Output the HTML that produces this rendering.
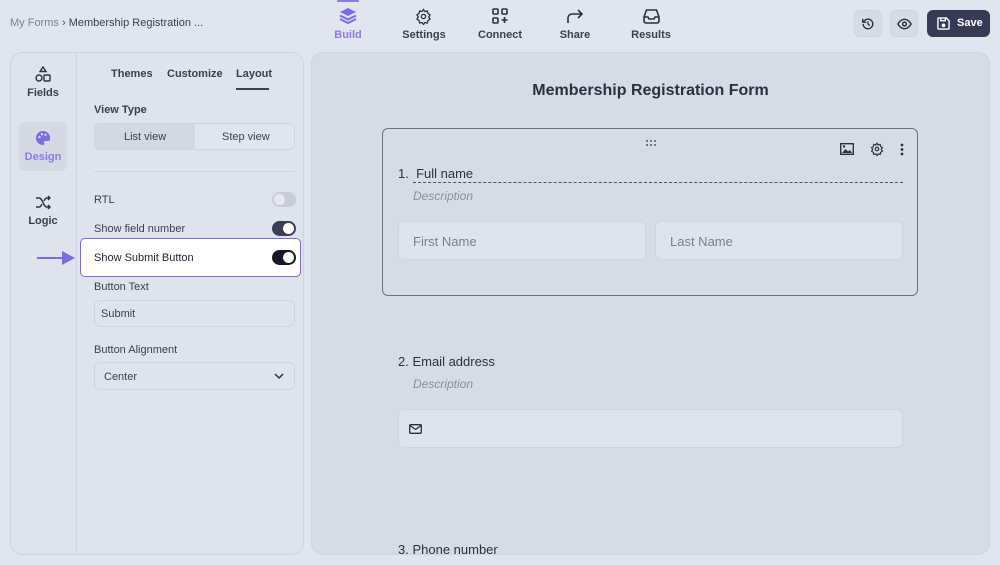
<!DOCTYPE html>
<html><head><meta charset="utf-8"><style>
*{box-sizing:border-box;margin:0;padding:0}
body{width:1000px;height:565px;overflow:hidden;background:#e1e5ed;font-family:"Liberation Sans",sans-serif;color:#2b3040;position:relative}
.a{position:absolute}
.t{font-size:11px;color:#3a3f4e}
svg{display:block}
.nav{text-align:center;font-size:11px;font-weight:bold;color:#3a3f4e}
.field{background:#dfe3eb;border:1px solid #cfd5df;border-radius:6px}
.tog{width:24px;height:15px;border-radius:8px;background:#3a3f52}
.tog::after{content:"";position:absolute;right:2px;top:2px;width:11px;height:11px;border-radius:50%;background:#fff}
.tog{position:absolute}
</style></head><body>
<div class="a" style="left:10px;top:17px;font-size:11px;color:#7c8190">My Forms <span style="color:#555">›</span> <span style="color:#3a3f4e">Membership Registration ...</span></div>

<div class="a" style="left:337px;top:0;width:22px;height:2px;background:#8b7be8;border-radius:1px"></div>
<div class="a" style="left:337px;top:7px;width:22px"><svg width="22" height="18" viewBox="0 0 22 18"><path d="M11 1L19 5L11 9L3 5Z" fill="#7c6ce0"/><path d="M3 8.5L11 12.5L19 8.5M3 12L11 16L19 12" stroke="#7c6ce0" stroke-width="2" fill="none"/></svg></div>
<div class="a nav" style="left:328px;top:29px;width:40px;color:#8b7be8">Build</div>
<div class="a" style="left:415px;top:8px"><svg width="17" height="17" viewBox="0 0 24 24" fill="none" stroke="#2b3040" stroke-width="1.8"><circle cx="12" cy="12" r="3"/><path d="M12 2l2 3 3.5-.8.8 3.5 3 2-2 3 2 3-3 2-.8 3.5-3.5-.8-2 3-2-3-3.5.8-.8-3.5-3-2 2-3-2-3 3-2 .8-3.5 3.5.8z"/></svg></div>
<div class="a nav" style="left:399px;top:29px;width:50px">Settings</div>
<div class="a" style="left:492px;top:8px"><svg width="16" height="16" viewBox="0 0 16 16" fill="none" stroke="#2b3040" stroke-width="1.6"><rect x="1" y="1" width="5" height="5" rx="1"/><rect x="10" y="1" width="5" height="5" rx="1"/><rect x="1" y="10" width="5" height="5" rx="1"/><path d="M12.5 9v6M9.5 12h6"/></svg></div>
<div class="a nav" style="left:475px;top:29px;width:50px">Connect</div>
<div class="a" style="left:566px;top:8px"><svg width="18" height="16" viewBox="0 0 18 16" fill="none" stroke="#2b3040" stroke-width="1.6"><path d="M2 15V10a4 4 0 014-4h10M12 2l4 4-4 4"/></svg></div>
<div class="a nav" style="left:555px;top:29px;width:40px">Share</div>
<div class="a" style="left:643px;top:8px"><svg width="17" height="16" viewBox="0 0 17 16" fill="none" stroke="#2b3040" stroke-width="1.6"><path d="M1 9l2.5-7h10L16 9v4a2 2 0 01-2 2H3a2 2 0 01-2-2z M1 9h4l1 2h5l1-2h4"/></svg></div>
<div class="a nav" style="left:626px;top:29px;width:50px">Results</div>

<div class="a" style="left:854px;top:10px;width:28px;height:27px;border-radius:6px;background:#d6dbe4;border:1px solid #cdd3de"><svg style="margin:6px 0 0 6px" width="14" height="14" viewBox="0 0 16 16" fill="none" stroke="#2b3040" stroke-width="1.5"><path d="M2.5 8a5.5 5.5 0 101.6-3.9L2 6M2 2v4h4M8 5v3l2 2"/></svg></div>
<div class="a" style="left:890px;top:10px;width:28px;height:27px;border-radius:6px;background:#d6dbe4;border:1px solid #cdd3de"><svg style="margin:7px 0 0 6px" width="15" height="12" viewBox="0 0 16 12" fill="none" stroke="#2b3040" stroke-width="1.5"><path d="M1 6s2.5-5 7-5 7 5 7 5-2.5 5-7 5-7-5-7-5z"/><circle cx="8" cy="6" r="2"/></svg></div>
<div class="a" style="left:927px;top:10px;width:63px;height:27px;border-radius:6px;background:#363a55;color:#fff;font-size:11px;font-weight:bold"><svg class="a" style="left:10px;top:7px" width="13" height="13" viewBox="0 0 14 14" fill="none" stroke="#fff" stroke-width="1.5"><path d="M1 2a1 1 0 011-1h8l3 3v8a1 1 0 01-1 1H2a1 1 0 01-1-1z M4 1v3h5V1"/><circle cx="7" cy="9" r="1.2" fill="#fff"/></svg><span class="a" style="left:30px;top:7px">Save</span></div>

<!-- left panel -->
<div class="a" style="left:10px;top:52px;width:294px;height:503px;border:1px solid #cfd5df;border-radius:12px;background:#dfe3eb"></div>
<div class="a" style="left:76px;top:53px;width:1px;height:501px;background:#cfd5df"></div>
<div class="a" style="left:35px;top:66px"><svg width="16" height="16" viewBox="0 0 16 16" fill="none" stroke="#2b3040" stroke-width="1.4"><path d="M8 1l3 4.5H5z"/><circle cx="4" cy="12" r="3"/><rect x="9" y="9" width="6" height="6" rx="1"/></svg></div>
<div class="a nav" style="left:23px;top:87px;width:40px">Fields</div>
<div class="a" style="left:19px;top:122px;width:48px;height:49px;border-radius:6px;background:#d4d9e3"></div>
<div class="a" style="left:35px;top:130px"><svg width="16" height="16" viewBox="0 0 16 16"><path d="M8 1a7 7 0 000 14c1.2 0 1.5-1 1-2s0-2 1.5-2H13a2 2 0 002-2A7 7 0 008 1z" fill="#7c6ce0"/><circle cx="4.5" cy="7" r="1.2" fill="#d4d9e3"/><circle cx="7" cy="4.2" r="1.2" fill="#d4d9e3"/><circle cx="10.5" cy="4.8" r="1.2" fill="#d4d9e3"/></svg></div>
<div class="a nav" style="left:23px;top:151px;width:40px;color:#8b7be8">Design</div>
<div class="a" style="left:35px;top:195px"><svg width="16" height="15" viewBox="0 0 16 15" fill="none" stroke="#2b3040" stroke-width="1.4"><path d="M1 3h3c4 0 4 9 8 9h3M1 12h3c1.5 0 2.3-1.3 3-3M9 6c.7-1.7 1.5-3 3-3h3M13 1l2 2-2 2M13 10l2 2-2 2"/></svg></div>
<div class="a nav" style="left:23px;top:215px;width:40px">Logic</div>

<div class="a nav" style="left:111px;top:68px">Themes</div>
<div class="a nav" style="left:167px;top:68px">Customize</div>
<div class="a nav" style="left:236px;top:68px">Layout</div>
<div class="a" style="left:236px;top:88px;width:33px;height:2px;background:#3a3f52"></div>
<div class="a nav" style="left:94px;top:104px">View Type</div>
<div class="a" style="left:94px;top:123px;width:201px;height:27px;border:1px solid #cfd5df;border-radius:6px;background:#e1e5ed;overflow:hidden"><div class="a" style="left:0;top:0;width:100px;height:27px;background:#d3d8e2"></div><span class="a t" style="left:29px;top:7px">List view</span><span class="a t" style="left:127px;top:7px">Step view</span></div>
<div class="a" style="left:94px;top:171px;width:201px;height:1px;background:#cfd5df"></div>
<div class="a t" style="left:94px;top:194px">RTL</div>
<div class="tog" style="left:272px;top:192px;background:#c7ccd6"></div><div class="a" style="left:274px;top:194px;width:11px;height:11px;border-radius:50%;background:#e6e9ef"></div>
<style>.tog[style*="c7ccd6"]::after{display:none}</style>
<div class="a t" style="left:94px;top:223px">Show field number</div>
<div class="tog" style="left:272px;top:221px"></div>
<div class="a" style="left:80px;top:238px;width:221px;height:39px;border:1.5px solid #7c6ce0;border-radius:5px;background:#fff"></div>
<div class="a t" style="left:94px;top:252px;color:#1f2330">Show Submit Button</div>
<div class="tog" style="left:272px;top:250px;background:#151826"></div>
<div class="a" style="left:37px;top:257px;width:28px;height:2px;background:#7c6ce0"></div>
<div class="a" style="left:62px;top:251px;width:0;height:0;border-left:13px solid #7c6ce0;border-top:7px solid transparent;border-bottom:7px solid transparent"></div>
<div class="a t" style="left:94px;top:281px">Button Text</div>
<div class="a field" style="left:94px;top:300px;width:201px;height:27px"><span class="a t" style="left:6px;top:7px">Submit</span></div>
<div class="a t" style="left:94px;top:344px">Button Alignment</div>
<div class="a field" style="left:94px;top:362px;width:201px;height:28px"><span class="a t" style="left:9px;top:8px">Center</span><svg class="a" style="left:179px;top:10px" width="10" height="7" viewBox="0 0 10 7" fill="none" stroke="#2b3040" stroke-width="1.5"><path d="M1 1l4 4 4-4"/></svg></div>

<!-- canvas -->
<div class="a" style="left:311px;top:52px;width:679px;height:503px;border:1px solid #cfd5df;border-radius:12px;background:#d6dce6;overflow:hidden">
<div class="a" style="left:0;width:677px;top:29px;text-align:center;font-size:16px;font-weight:bold;color:#2b3040">Membership Registration Form</div>
<div class="a" style="left:70px;top:75px;width:536px;height:168px;border:1.5px solid #6c7282;border-radius:6px"></div>
<svg class="a" style="left:333px;top:86px" width="12" height="8" viewBox="0 0 12 8" fill="#555"><circle cx="2" cy="2" r="1"/><circle cx="6" cy="2" r="1"/><circle cx="10" cy="2" r="1"/><circle cx="2" cy="6" r="1"/><circle cx="6" cy="6" r="1"/><circle cx="10" cy="6" r="1"/></svg>
<svg class="a" style="left:528px;top:90px" width="14" height="12" viewBox="0 0 14 12"><rect x="0.7" y="0.7" width="12.6" height="10.6" fill="none" stroke="#2b3040" stroke-width="1.4"/><path d="M2 10l3.5-4 2.5 2.5 2-1.5 2 3z" fill="#2b3040"/><circle cx="4" cy="3.5" r="1.2" fill="#2b3040"/></svg>
<svg class="a" style="left:558px;top:89px" width="14" height="14" viewBox="0 0 24 24" fill="none" stroke="#2b3040" stroke-width="2"><circle cx="12" cy="12" r="3"/><path d="M12 2l2 3 3.5-.8.8 3.5 3 2-2 3 2 3-3 2-.8 3.5-3.5-.8-2 3-2-3-3.5.8-.8-3.5-3-2 2-3-2-3 3-2 .8-3.5 3.5.8z"/></svg>
<svg class="a" style="left:588px;top:90px" width="4" height="13" viewBox="0 0 4 13" fill="#2b3040"><circle cx="2" cy="2" r="1.4"/><circle cx="2" cy="6.5" r="1.4"/><circle cx="2" cy="11" r="1.4"/></svg>
<div class="a" style="left:86px;top:113px;font-size:13px;color:#2b3040">1.&nbsp; Full name</div>
<div class="a" style="left:101px;top:129px;width:490px;border-top:1px dashed #555"></div>
<div class="a" style="left:101px;top:136px;font-size:12px;font-style:italic;color:#8a8f9c">Description</div>
<div class="a field" style="left:86px;top:168px;width:248px;height:39px"><span class="a" style="left:14px;top:12px;font-size:13px;color:#7c8190">First Name</span></div>
<div class="a field" style="left:343px;top:168px;width:248px;height:39px"><span class="a" style="left:14px;top:12px;font-size:13px;color:#7c8190">Last Name</span></div>
<div class="a" style="left:86px;top:301px;font-size:13px;color:#2b3040">2. Email address</div>
<div class="a" style="left:101px;top:324px;font-size:12px;font-style:italic;color:#8a8f9c">Description</div>
<div class="a field" style="left:86px;top:356px;width:505px;height:39px"><svg class="a" style="left:10px;top:14px" width="13" height="10" viewBox="0 0 13 10" fill="none" stroke="#2b3040" stroke-width="1.3"><rect x="0.7" y="0.7" width="11.6" height="8.6" rx="1"/><path d="M1 1.5l5.5 4 5.5-4"/></svg></div>
<div class="a" style="left:86px;top:489px;font-size:13px;color:#2b3040">3. Phone number</div>
</div>
</body></html>
